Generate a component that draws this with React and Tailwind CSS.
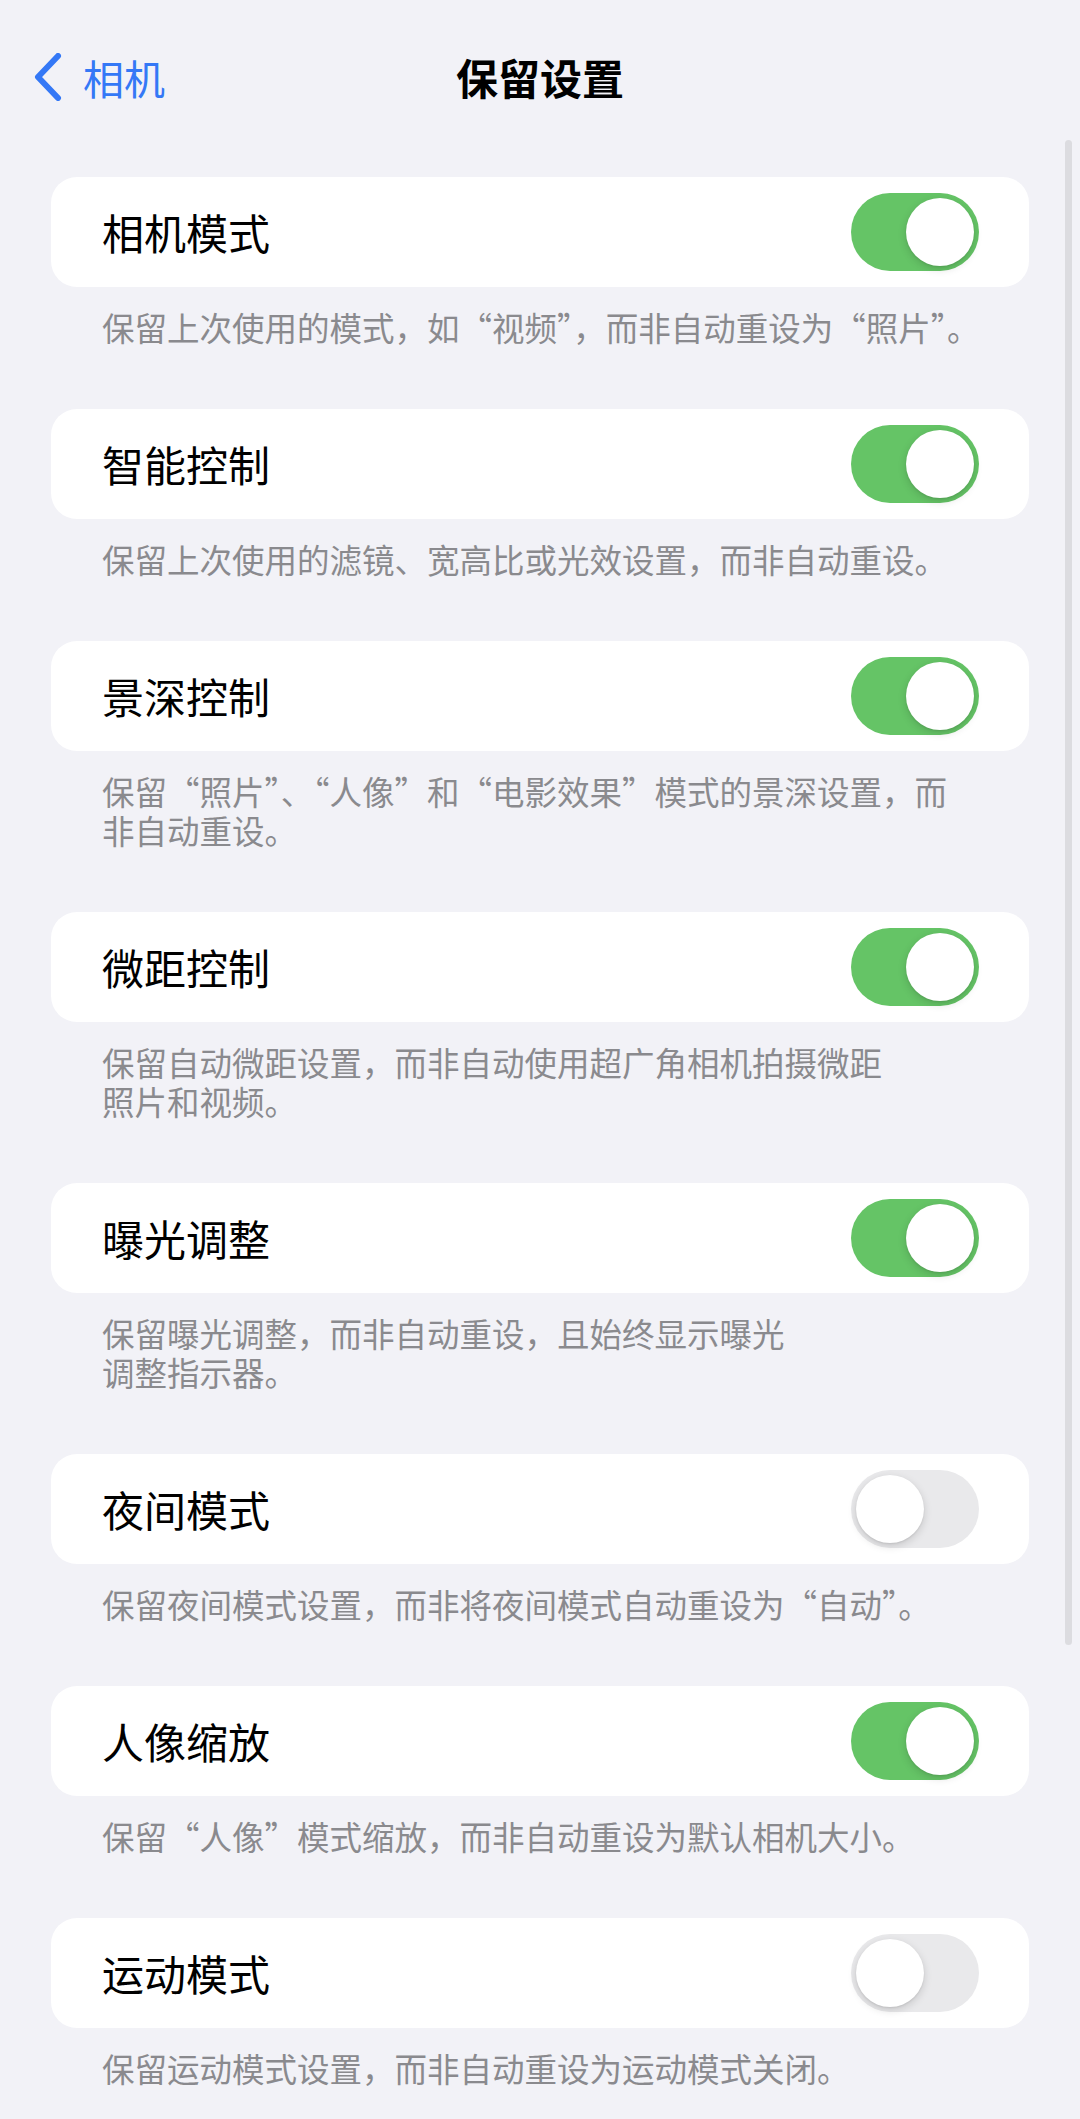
const items = [
  { label: "相机模式", on: true, desc: ["保留上次使用的模式，如“视频”，而非自动重设为“照片”。"] },
  { label: "智能控制", on: true, desc: ["保留上次使用的滤镜、宽高比或光效设置，而非自动重设。"] },
  { label: "景深控制", on: true, desc: ["保留“照片”、“人像”和“电影效果”模式的景深设置，而", "非自动重设。"] },
  { label: "微距控制", on: true, desc: ["保留自动微距设置，而非自动使用超广角相机拍摄微距", "照片和视频。"] },
  { label: "曝光调整", on: true, desc: ["保留曝光调整，而非自动重设，且始终显示曝光", "调整指示器。"] },
  { label: "夜间模式", on: false, desc: ["保留夜间模式设置，而非将夜间模式自动重设为“自动”。"] },
  { label: "人像缩放", on: true, desc: ["保留“人像”模式缩放，而非自动重设为默认相机大小。"] },
  { label: "运动模式", on: false, desc: ["保留运动模式设置，而非自动重设为运动模式关闭。"] },
];

function Toggle({ on }) {
  return (
    <div
      className={
        on
          ? "w-[128px] h-[78px] rounded-full bg-[#65c466] flex items-center justify-end px-[5px]"
          : "w-[128px] h-[78px] rounded-full bg-[#e9e9eb] flex items-center justify-start px-[5px]"
      }
    >
      <div className="w-[68px] h-[68px] rounded-full bg-white shadow-[0_3px_8px_rgba(0,0,0,0.15),0_1px_2px_rgba(0,0,0,0.08)]" />
    </div>
  );
}

export default function App() {
  return (
    <div
      className="relative w-full min-h-[2119px] bg-[#f2f2f7] text-black"
      style={{ fontFamily: '"Noto Sans CJK SC", "Noto Sans", sans-serif' }}
    >
      {/* 导航栏 */}
      <div className="h-[154px] grid grid-cols-[1fr_auto_1fr] items-center">
        <div className="flex items-center pl-[33px] text-[#3478f6]">
          <svg width="30" height="48" viewBox="0 0 30 48" fill="none">
            <path
              d="M25 3 L5 24 L25 45"
              stroke="#3478f6"
              strokeWidth="6"
              strokeLinecap="round"
              strokeLinejoin="round"
            />
          </svg>
          <span className="ml-[20px] text-[41px] leading-none">相机</span>
        </div>
        <div className="text-[42px] font-semibold leading-none">保留设置</div>
        <div />
      </div>

      {/* 设置列表 */}
      <div className="px-[51px] pt-[23px]">
        {items.map((item) => (
          <div key={item.label} className="mb-[63px]">
            <div className="h-[110px] rounded-[26px] bg-white flex items-center justify-between pl-[51px] pr-[50px]">
              <span className="text-[42px] leading-none">{item.label}</span>
              <Toggle on={item.on} />
            </div>
            <p className="mt-[20px] pl-[51px] text-[32.5px] leading-[39px] text-[#8a8a8e] whitespace-nowrap">
              {item.desc[0]}
              {item.desc[1] && (
                <>
                  <br />
                  {item.desc[1]}
                </>
              )}
            </p>
          </div>
        ))}
      </div>

      {/* 滚动条 */}
      <div className="absolute right-[8px] top-[140px] w-[7px] h-[1505px] rounded-full bg-[#dcdce0]" />
    </div>
  );
}
